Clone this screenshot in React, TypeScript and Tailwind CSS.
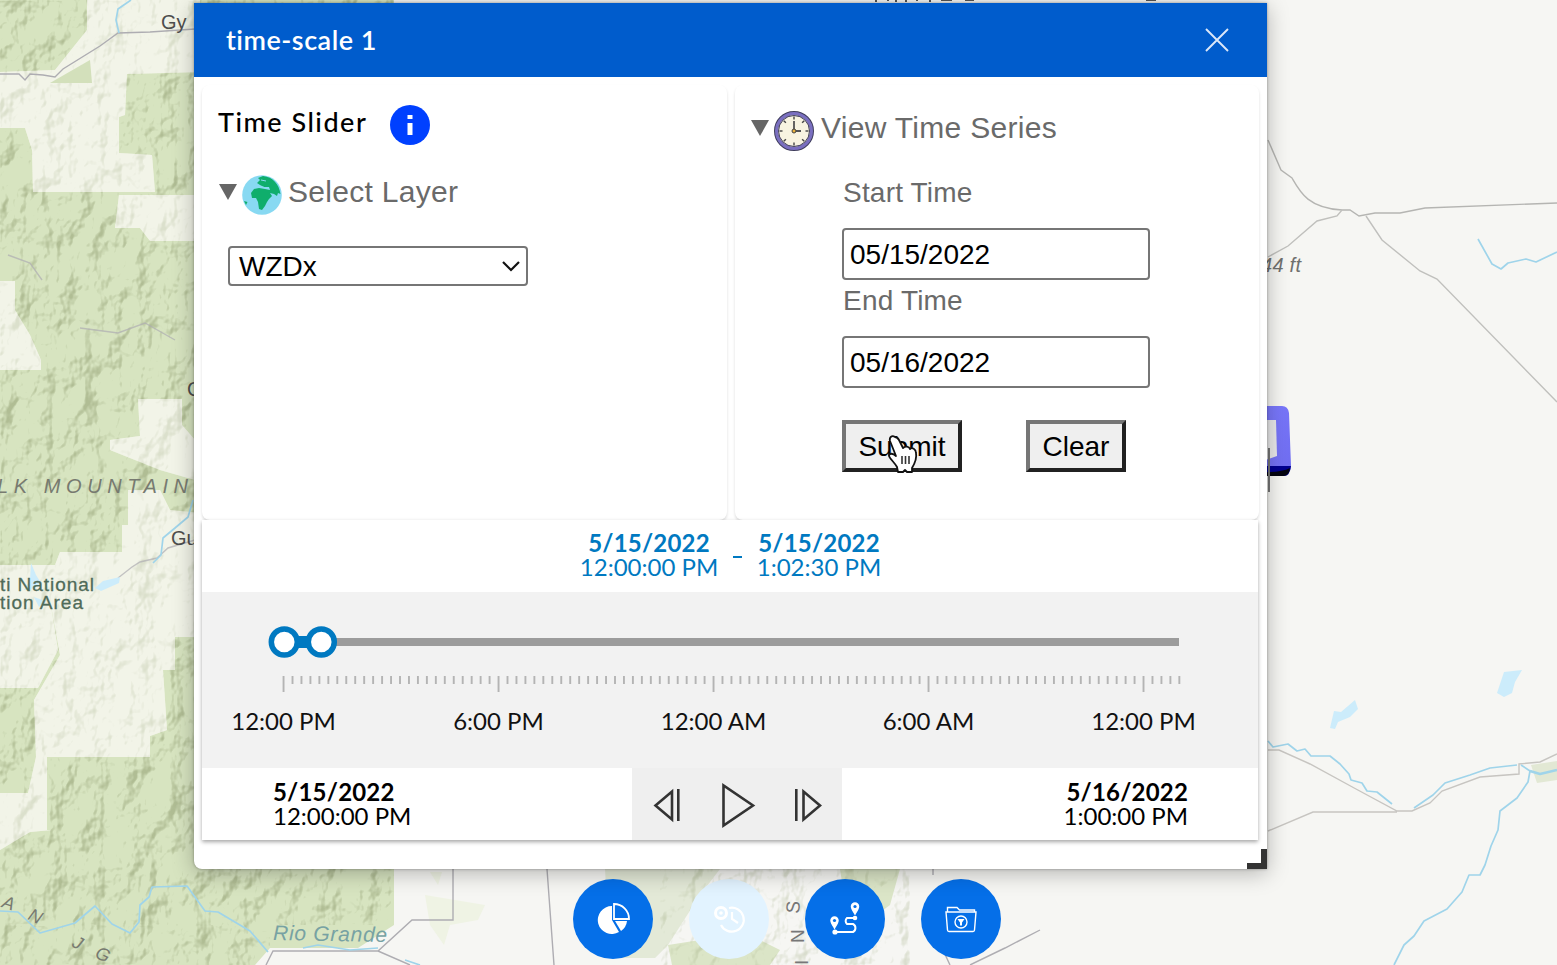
import React from "react";

const LATO = "font-['Lato',sans-serif] [font-variant-ligatures:none]";
const ARIAL = "font-['Liberation_Sans',sans-serif]";

function MapCanvas() {
  const clearings = (
    <>
      <path d="M87 0H200V72L127 74L125 115L119 117V153L152 155L155 192H33L32 150L25 128H0V72L55 70L87 30Z" />
      <path d="M119 195H200V241H150L140 228H115Z" />
      <path d="M0 281H15V310L30 335L41 360V370H0Z" />
      <path d="M138 399H182V425L195 440V480L160 470L110 450V440L140 436Z" />
      <path d="M128 490H160L170 510L200 513V637H175V670H163L167 730L150 736V757H36L34 700L60 655L50 600L0 605V565H55L60 552H122V525H128Z" />
      <path d="M0 600H50L58 650L38 688H0Z" />
      <path d="M36 757H47V830H52L30 832L0 850V793H28Z" />
    </>
  );
  return (
    <svg className="absolute inset-0" width="1557" height="965" viewBox="0 0 1557 965" fill="none">
      <defs>
        <filter id="hills" x="0" y="0" width="1" height="1" colorInterpolationFilters="sRGB">
          <feTurbulence type="fractalNoise" baseFrequency="0.034 0.026" numOctaves="4" seed="23" />
          <feDiffuseLighting surfaceScale="13" diffuseConstant="1" lightingColor="#fff">
            <feDistantLight azimuth="225" elevation="55" />
          </feDiffuseLighting>
          <feColorMatrix values="0 0 0 0 .60  0 0 0 0 .65  0 0 0 0 .48  -1.7 0 0 0 1.2" />
          <feGaussianBlur stdDeviation="0.6" />
        </filter>
        <linearGradient id="badge" x1="0" y1="0" x2="1" y2="1">
          <stop stopColor="#7d7bff" />
          <stop offset="1" stopColor="#6f6df0" />
        </linearGradient>
      </defs>
      <rect width="1557" height="965" fill="#f6f6f3" />
      <rect width="394" height="925" fill="#d7e4c0" />
      <path d="M0 920H394V925L358 948H270L255 965H0Z" fill="#d7e4c0" />
      <g fill="#f2f4e8">{clearings}</g>
      <path d="M605 869H720L700 895L668 945L655 958H610Z" fill="#e3e9d7" />
      <path d="M668 945L700 940L740 930L780 950L770 965H672Z M840 869H900L890 905L850 935Z" fill="#dbe5c7" />
      <path d="M425 895L485 905L478 920L450 925L444 945L430 925ZM430 872H442L438 885Z" fill="#eff3e4" />
      <g opacity=".62">
        <rect width="394" height="925" filter="url(#hills)" />
        <rect y="925" width="270" height="40" filter="url(#hills)" />
      </g>
      <g fill="#f2f4e8" opacity=".6">{clearings}</g>
      <path d="M90 60L92 83H50Z" fill="#d3e0bb" />
      <g opacity=".3">
        <rect x="660" y="869" width="250" height="96" filter="url(#hills)" />
      </g>

      <g stroke="#aeadb2" strokeWidth="1.4">
        <path d="M0 74H19L25 80L30 74L43 75L55 77L63 69L100 46L118 33L150 32L195 29" />
        <path d="M8 255L30 263L42 280M80 328L118 333L145 323L175 340" opacity=".7" />
        <path d="M118 578L132 567L140 562L157 558L168 548L195 540" opacity=".7" />
        <path d="M453 869V920H412L378 951H273L266 965M378 951L410 965" />
        <path d="M547 869L554 965M933 869V875M943 950L950 965M970 965L1005 948L1040 930" />
        <path d="M1268 140L1281 170L1292 178C1300 192 1308 208 1342 210H1350L1359 216L1375 213H1400L1425 208L1557 203" stroke="#b5b5b2" />
        <path d="M1268 257L1288 246L1317 221L1337 216L1342 210M1366 216L1382 240L1420 271L1437 279L1557 402" stroke="#c0c0bd" />
        <path d="M1268 750H1279L1310 764L1356 789L1397 811H1412L1430 803L1442 791L1480 777L1519 774V764L1540 762L1557 754M1268 831L1313 812H1397" stroke="#c7c5c1" />
      </g>
      <path d="M1531 765L1557 761V780L1537 783Z" fill="#e2e8d4" />
      <g stroke="#9fd4ea" strokeWidth="1.7" strokeLinejoin="round">
        <path d="M131 0L118 9L116 20L119 33" />
        <path d="M193 500L188 517L175 528L163 538L161 555L153 563" />
        <path d="M0 911L18 912L40 933L75 923L95 906L112 924L130 933L139 922L140 905L149 897L152 887L187 886L205 911L218 912L250 931L268 952" />
        <path d="M303 948L318 945L350 950L378 948M405 960L420 965" />
        <path d="M1478 239L1492 264L1501 269L1508 263L1526 259L1536 262L1557 252" />
        <path d="M1268 741L1273 747L1288 744L1297 751L1305 749L1311 756L1330 756L1340 764L1349 774L1351 780L1362 783L1367 791L1377 792L1392 804M1414 808L1433 795L1445 783L1470 775L1490 768L1517 765M1521 765L1530 771L1528 782L1517 798L1500 811L1498 830L1491 846L1485 865L1480 875H1469L1462 892L1447 909L1424 921L1414 936L1404 945L1394 965" />
        <path d="M1530 771L1540 774L1557 770" strokeWidth="2.5" />
      </g>
      <g fill="#ccecfb">
        <path d="M31 563L36 575L41 583L30 590H24L30 580ZM95 588L103 581L120 577L119 583L101 591ZM34 597L45 601L39 607Z" />
        <path d="M1330 728L1334 711L1341 712L1355 700L1358 709L1350 717L1338 722L1335 729ZM1497 693L1504 672L1522 670L1515 682L1512 693L1504 697Z" />
      </g>

      <g fontFamily="Liberation Sans, sans-serif">
        <g fill="#4d4d4d" fontSize="20">
          <text x="161" y="28.500">Gy</text>
          <text x="171" y="544.500">Gu</text>
          <text x="187" y="396">C</text>
        </g>
        <text x="-3" y="493" fontSize="20" fontStyle="italic" fill="#777a70" textLength="191">LK MOUNTAIN</text>
        <g fill="#4f6b59" fontSize="19" stroke="#4f6b59" strokeWidth=".3">
          <text x="0" y="591" textLength="94">ti National</text>
          <text x="0" y="609" textLength="83">tion Area</text>
        </g>
        <g fill="#777a70" fontSize="18" fontStyle="italic">
          <text transform="translate(1 907) rotate(18)">A</text>
          <text transform="translate(27 919) rotate(25)">N</text>
          <text transform="translate(71 946) rotate(28)">J</text>
          <text transform="translate(94 957) rotate(25)">G</text>
        </g>
        <text x="273" y="940" fontSize="21" fontStyle="italic" fill="#77a2a3" textLength="114" transform="rotate(1 273 940)">Rio Grande</text>
        <g fill="#777" fontSize="19">
          <text transform="translate(799 914) rotate(-85)">S</text>
          <text transform="translate(804 943) rotate(-90)">N</text>
          <text transform="translate(808 965) rotate(-90)">I</text>
        </g>
        <text x="1261" y="272" fontSize="20" fontStyle="italic" fill="#70706e" textLength="40">44 ft</text>
      </g>
      <g stroke="#555" strokeWidth="2">
        <path d="M876 0V2M888 0V1M896 0V2M906 0V2M917 0V1M930 0V2M941 0H952M965 0H974M1146 0H1156" />
      </g>

      <path d="M1260 406H1282Q1288 406 1289 413L1291 466Q1291 473 1284 473H1260V420H1276L1277 456L1268 460V465H1260Z" fill="url(#badge)" />
      <path d="M1260 420H1276L1277 456L1260 462Z" fill="#e9e9ea" />
      <path d="M1260 466H1291Q1290 476 1284 476H1260Z" fill="#000090" />
      <path d="M1260 472Q1280 473 1290 468Q1289 476 1283 476H1260Z" fill="#050510" />
      <path d="M1269 448V492" stroke="#777" strokeWidth="2" />
    </svg>
  );
}

function Globe() {
  return (
    <svg width="40" height="40" viewBox="0 0 40 40">
      <circle cx="20" cy="20" r="19.800" fill="#88d9f2" />
      <path d="M15 8L18 5L16 3L21 1C31 2 37 9 38.500 19L36 18L35 21L32 19L28 18L30 21L27 24L25 27L23 31L20 35L17 34L16 27L14 23L10 23L9 18L12 14L17 13L23 14L28 15L27 12L22 12L18 10Z" fill="#0fae6c" />
      <path d="M2 26L5.500 27L4 30Z" fill="#0fae6c" />
      <path d="M15 10.500L20 12L25 13M19 5L24 6" stroke="#88d9f2" fill="none" />
    </svg>
  );
}

function Clock() {
  const marks = [0, 45, 90, 135, 180, 225, 270, 315];
  return (
    <svg width="40" height="40" viewBox="0 0 40 40">
      <circle cx="20" cy="20" r="18" fill="#f8f4e1" stroke="#3f3d5c" strokeWidth="4" />
      <circle cx="20" cy="20" r="17.500" fill="none" stroke="#7a6fc0" strokeWidth="3" />
      <circle cx="20" cy="20" r="15.500" fill="none" stroke="#3f3d5c" />
      {marks.map((a) => (
        <path key={a} d="M20 5.500V8.500" stroke="#444" strokeWidth="1.400" transform={`rotate(${a} 20 20)`} />
      ))}
      <path d="M20 10V20H27" stroke="#555" strokeWidth="1.800" fill="none" />
      <circle cx="20" cy="20" r="2" fill="#e9b23c" stroke="#444" />
    </svg>
  );
}

function Triangle() {
  return (
    <svg width="18" height="16" viewBox="0 0 18 16">
      <path d="M0 0H18L9 16Z" fill="#666" />
    </svg>
  );
}

function DateBlock({ date, time, className }: { date: string; time: string; className: string }) {
  return (
    <div className={`flex flex-col text-[24px] leading-[24px] whitespace-nowrap ${className}`}>
      <span className="font-bold tracking-[0.2px]">{date}</span>
      <span>{time}</span>
    </div>
  );
}

function DateField({ label, value }: { label: string; value: string }) {
  return (
    <label className="flex flex-col text-[28px] text-[#6a6a6a]">
      <span className="flex h-[56px] items-start pl-[1px] leading-[42px] tracking-[0.2px]">{label}</span>
      <input
        readOnly
        defaultValue={value}
        className="h-[52px] w-[308px] rounded-[4px] border-2 border-[#767676] bg-white px-[6px] pt-[2px] text-[28px] text-black outline-none"
      />
    </label>
  );
}

function PushButton({ children, className }: { children: React.ReactNode; className: string }) {
  return (
    <button
      className={`h-[52px] border-4 border-t-[#767676] border-r-[#212121] border-b-[#212121] border-l-[#767676] bg-[#efefef] pt-[2px] text-[28px] leading-none text-black ${className}`}
    >
      {children}
    </button>
  );
}

function Ruler() {
  const ticks = Array.from({ length: 101 }, (_, i) => i);
  return (
    <svg className="block" width="976" height="66" viewBox="264 624 976 66" overflow="visible">
      <rect x="284" y="638" width="895" height="8" fill="#9c9c9c" />
      <rect x="284" y="636" width="37" height="12" fill="#0079c1" />
      <circle cx="284.300" cy="642" r="13" fill="#fff" stroke="#0079c1" strokeWidth="5.500" />
      <circle cx="321.300" cy="642" r="13" fill="#fff" stroke="#0079c1" strokeWidth="5.500" />
      {ticks.map((i) => (
        <rect key={i} x={282.6 + i * 8.958} y="676" width="1.900" height={i % 24 === 0 ? 16 : 8} fill="#b4b4b4" />
      ))}
    </svg>
  );
}

function HandCursor() {
  return (
    <svg className="absolute top-[13px] left-[43px]" width="34" height="44" viewBox="0 0 34 44">
      <path
        d="M10 4C7 2 4 4 5 8L11 23C8 20 4 20 4 23C5 26 10 30 12 34L13 39H18L20 37L22 39H27L27 35C30 30 32 25 31 20C31 16 27 14 25 16C24 13 20 13 18 15L14 7C13 5 11 4 10 4Z"
        fill="#fff"
        stroke="#111"
        strokeWidth="1.800"
        strokeLinejoin="round"
      />
      <path d="M17 23V31M20.500 23V31M24 23V31" stroke="#333" strokeWidth="1.600" />
    </svg>
  );
}

const HOURS = ["12:00 PM", "6:00 PM", "12:00 AM", "6:00 AM", "12:00 PM"];

function TimeSlider() {
  return (
    <section className={`relative h-[320px] w-[1056px] bg-white shadow-[0_2px_4px_rgba(0,0,0,0.35)] ${LATO}`}>
      <div className="flex h-[72px] items-center justify-center pb-[2px] pl-[1px] text-center text-[#0079c1]">
        <DateBlock date="5/15/2022" time="12:00:00 PM" className="w-[138px] items-center" />
        <span className="flex w-[39px] justify-center">
          <span className="mt-[4px] h-[2px] w-[9px] bg-[#0079c1]" />
        </span>
        <DateBlock date="5/15/2022" time="1:02:30 PM" className="w-[124px] items-center" />
      </div>
      <div className="h-[176px] bg-[#f2f2f2] pt-[32px] pl-[62px]">
        <Ruler />
        <div className="-ml-[88px] flex pt-[16px]">
          {HOURS.map((h, i) => (
            <span key={i} className="w-[215px] shrink-0 text-center text-[24px] leading-[30px] text-[#111]">
              {h}
            </span>
          ))}
        </div>
      </div>
      <div className="flex h-[72px] text-black">
        <DateBlock date="5/15/2022" time="12:00:00 PM" className="w-[430px] justify-center pb-[1px] pl-[71px]" />
        <div className="flex w-[210px] items-center bg-[#efefef]">
          <svg width="210" height="72" viewBox="0 0 210 72" fill="none" stroke="#333" strokeWidth="2.600">
            <path d="M40 23.500V51.500L23.500 37.500ZM46.300 21V53" />
            <path d="M91.500 17.500V57.500L121 37.500Z" />
            <path d="M171.500 23.500V51.500L188 37.500ZM164.300 21V53" />
          </svg>
        </div>
        <DateBlock date="5/16/2022" time="1:00:00 PM" className="flex-1 items-end justify-center pr-[70px] pb-[1px]" />
      </div>
    </section>
  );
}

function TimeScaleWindow() {
  return (
    <main className="absolute top-[3px] left-[194px] flex h-[866px] w-[1073px] flex-col overflow-visible rounded-b-[8px] rounded-br-none bg-white shadow-[0_0_3px_rgba(0,0,0,0.35),0_4px_22px_rgba(0,0,0,0.28)]">
      <header className={`flex h-[74px] shrink-0 items-center justify-between bg-[#005ccc] pr-[38px] pl-[32px] text-white ${LATO}`}>
        <h1 className="pt-[1px] text-[27px] font-semibold tracking-[0.5px]">time-scale 1</h1>
        <svg width="24" height="24" viewBox="0 0 24 24" stroke="#dce8f8" strokeWidth="1.900">
          <path d="M1 1L23 23M23 1L1 23" />
        </svg>
      </header>
      <div className={`flex h-[443px] shrink-0 gap-[8px] px-[8px] pt-[8px] ${ARIAL}`}>
        <section className="h-[435px] w-[525px] rounded-[8px] bg-white px-[16px] pt-[20px] shadow-[0_2px_3px_rgba(0,0,0,0.14)]">
          <div className="flex h-[40px] items-center">
            <h2 className={`w-[172px] pb-[5px] text-[27px] font-medium tracking-[1.5px] whitespace-nowrap text-black ${LATO}`}>Time Slider</h2>
            <svg width="40" height="40" viewBox="0 0 40 40">
              <circle cx="20" cy="20" r="20" fill="#0040ff" />
              <path d="M17.500 10H22.500V14H17.500ZM17.500 18H22.500V30H17.500Z" fill="#fff" />
            </svg>
          </div>
          <div className="mt-[30px] flex h-[40px] items-center pl-[1px] text-[30px] text-[#6a6a6a]">
            <span className="pb-[6px]">
              <Triangle />
            </span>
            <span className="mr-[6px] ml-[5px]">
              <Globe />
            </span>
            <span className="pb-[8px] tracking-[0.3px]">Select Layer</span>
          </div>
          <div className="mt-[31px] ml-[10px] flex h-[40px] w-[300px] items-center justify-between rounded-[4px] border-2 border-[#767676] pr-[8px] pl-[9px] text-[28px] leading-none text-black">
            <span className="pt-[1px]">WZDx</span>
            <svg className="-mr-[3px]" width="20" height="12" viewBox="0 0 20 12" fill="none" stroke="#111" strokeWidth="2.200">
              <path d="M2 2L10 10L18 2" />
            </svg>
          </div>
        </section>
        <section className="h-[435px] w-[524px] rounded-[8px] bg-white px-[16px] pt-[26px] shadow-[0_2px_3px_rgba(0,0,0,0.14)]">
          <div className="flex h-[40px] items-center text-[30px] text-[#6a6a6a]">
            <span className="pb-[6px]">
              <Triangle />
            </span>
            <span className="mr-[7px] ml-[5px]">
              <Clock />
            </span>
            <span className="pb-[8px] tracking-[0.3px]">View Time Series</span>
          </div>
          <div className="mt-[21px] ml-[91px] flex flex-col">
            <DateField label="Start Time" value="05/15/2022" />
            <DateField label="End Time" value="05/16/2022" />
            <div className="mt-[32px] flex gap-[64px]">
              <span className="relative">
                <PushButton className="w-[120px]">Submit</PushButton>
                <HandCursor />
              </span>
              <PushButton className="w-[100px]">Clear</PushButton>
            </div>
          </div>
        </section>
      </div>
      <div className="pl-[8px]">
        <TimeSlider />
      </div>
      <span className="absolute right-0 bottom-0 h-[20px] w-[20px] border-r-[6px] border-b-[6px] border-[#333]" />
    </main>
  );
}

function ToolButton({ muted, children }: { muted?: boolean; children: React.ReactNode }) {
  return (
    <button className={`flex h-[80px] w-[80px] items-center justify-center rounded-full ${muted ? "bg-[#e2f3ff]" : "bg-[#056fe8]"}`}>
      <svg width="36" height="36" viewBox="0 0 36 36" fill="none" stroke="#fff" strokeWidth="1.800">
        {children}
      </svg>
    </button>
  );
}

function Toolbar() {
  return (
    <nav className="absolute top-[879px] left-[573px] flex gap-[36px]">
      <ToolButton>
        <path d="M17 5A14 14 0 1 0 24 31L17 19Z" fill="#fff" stroke="none" />
        <path d="M20 20H32A14 14 0 0 1 26 30Z" fill="#fff" stroke="none" />
        <path d="M19 3V18H34A15 15 0 0 0 19 3Z" />
      </ToolButton>
      <ToolButton muted>
        <circle cx="10" cy="12" r="5.500" strokeWidth="3" />
        <circle cx="10" cy="12" r="1.800" fill="#fff" stroke="none" />
        <path d="M18 7A12 12 0 1 1 10 24M21 11V18L27 22" strokeWidth="2.200" />
      </ToolButton>
      <ToolButton>
        <path d="M8 31H26A4.500 4.500 0 0 0 26 23H20A4 4 0 0 1 20 17H28" strokeWidth="2" />
        <circle cx="8" cy="31" r="2.600" fill="#fff" stroke="none" />
        <circle cx="28" cy="17" r="2.300" fill="#fff" stroke="none" />
        <path d="M7.500 27C5 23 4 21.500 4 19.500A3.500 3.500 0 0 1 11 19.500C11 21.500 10 23 7.500 27ZM28 13C25.500 9 24.500 7.500 24.500 5.500A3.500 3.500 0 0 1 31.500 5.500C31.500 7.500 30.500 9 28 13Z" fill="#fff" stroke="#fff" strokeWidth="1.500" />
        <circle cx="7.500" cy="19.500" r="1.600" fill="#056fe8" stroke="none" />
        <circle cx="28" cy="5.500" r="1.600" fill="#056fe8" stroke="none" />
      </ToolButton>
      <ToolButton>
        <path d="M3 11H33L31.500 29Q31.400 30.500 30 30.500H6Q4.600 30.500 4.500 29ZM4.500 11V6.500H14L16.500 9H31.500V11" strokeWidth="1.400" />
        <circle cx="18" cy="21" r="6" strokeWidth="1.400" />
        <path d="M14.500 18H21.500L19 21.500V24.500H17V21.500Z" fill="#fff" stroke="none" />
      </ToolButton>
    </nav>
  );
}

export default function App() {
  return (
    <div className="relative h-[965px] w-[1557px] overflow-hidden bg-[#f6f6f3]">
      <MapCanvas />
      <Toolbar />
      <TimeScaleWindow />
    </div>
  );
}
